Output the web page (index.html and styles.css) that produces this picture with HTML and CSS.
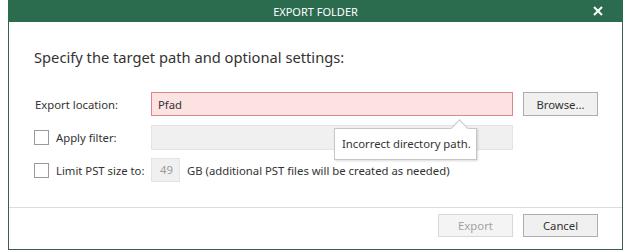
FILE: index.html
```html
<!DOCTYPE html>
<html lang="en">
<head>
    <meta charset="UTF-8">
    <title>Export Folder</title>
    <link rel="stylesheet" href="styles.css">
</head>
<body>
    <div class="dialog">
        <div class="titlebar">
            EXPORT FOLDER
            <span class="close">
                <svg width="10" height="10" viewBox="0 0 10 10"><path d="M1 1 L9 9 M9 1 L1 9" stroke="#fff" stroke-width="2"/></svg>
            </span>
        </div>

        <div class="content">
            <h1>Specify the target path and optional settings:</h1>

            <div class="form">
                <label class="label">Export location:</label>
                <input type="text" class="field invalid" value="Pfad">
                <button type="button" class="btn">Browse...</button>

                <label class="label"><span class="check"></span>Apply filter:</label>
                <div class="field disabled"></div>
                <div></div>

                <label class="label"><span class="check"></span>Limit PST size to:</label>
                <div class="size-row">
                    <div class="number">49</div>
                    <span>GB (additional PST files will be created as needed)</span>
                </div>

                <div class="tooltip">Incorrect directory path.</div>
            </div>
        </div>

        <div class="footer">
            <button type="button" class="btn" disabled>Export</button>
            <button type="button" class="btn">Cancel</button>
        </div>
    </div>
</body>
</html>
```

FILE: styles.css
```css
body {
    margin: 0;
    font-family: "Noto Sans", "Open Sans", sans-serif;
    font-size: 11.3px;
    color: #333;
    background-color: white;
}
.dialog {
    margin-left: 8px;
    width: 615px;
    height: 250px;
    box-sizing: border-box;
    border: 1px solid #3d5c52;
    border-top: none;
    display: flex;
    flex-direction: column;
}
.titlebar {
    position: relative;
    height: 22px;
    margin: 0 -1px;
    background-color: #2b6c4f;
    color: white;
    font-size: 11px;
    display: flex;
    align-items: center;
    justify-content: center;
}
.close {
    position: absolute;
    right: 20px;
    top: 6px;
    line-height: 0;
}
.content {
    flex: 1;
    padding: 25px 24px 0 25px;
}
h1 {
    margin: 0;
    font-size: 14.7px;
    font-weight: normal;
    line-height: 20px;
    color: #333;
}
.form {
    position: relative;
    margin-top: 25px;
    display: grid;
    grid-template-columns: 107px 362px 75px;
    grid-auto-rows: 24px;
    column-gap: 10px;
    row-gap: 9px;
}
.label {
    display: flex;
    align-items: center;
    padding-left: 1px;
    white-space: nowrap;
}
.check {
    flex: none;
    width: 13px;
    height: 13px;
    border: 1px solid #9a9a9a;
    background: white;
    margin: 0 7px 0 -1px;
}
.field {
    box-sizing: border-box;
    height: 24px;
    margin: 0;
    padding: 0 6px;
    font-family: inherit;
    font-size: 11.3px;
    color: #333;
    outline: none;
}
.invalid {
    background-color: #fde2e2;
    border: 1px solid #d9888e;
}
.disabled {
    background-color: #f0f0f0;
    border: 1px solid #e3e3e3;
    height: 25px;
}
.size-row {
    grid-column: 2 / 4;
    display: flex;
    align-items: center;
    gap: 7px;
    white-space: nowrap;
}
.number {
    box-sizing: border-box;
    width: 29px;
    height: 24px;
    background-color: #f0f0f0;
    border: 1px solid #e3e3e3;
    color: #9a9a9a;
    text-align: right;
    padding-right: 6px;
    line-height: 22px;
}
.btn {
    box-sizing: border-box;
    width: 75px;
    height: 24px;
    font-family: inherit;
    font-size: 11.3px;
    color: #333;
    background-color: #f0f0f0;
    border: 1px solid #adadad;
    padding: 0;
}
.btn:disabled {
    color: #a3a3a3;
    background-color: #f4f4f4;
    border-color: #d9d9d9;
}
.tooltip {
    position: absolute;
    left: 300px;
    top: 36px;
    box-sizing: border-box;
    width: 143px;
    height: 32px;
    padding: 0 7px;
    line-height: 30px;
    font-size: 11.3px;
    white-space: nowrap;
    background: white;
    border: 1px solid #c6c6c6;
    box-shadow: 1px 1px 2px rgba(0,0,0,0.15);
}
.tooltip::before {
    content: "";
    position: absolute;
    left: 118px;
    top: -7px;
    width: 12px;
    height: 12px;
    background: white;
    border-top: 1px solid #c6c6c6;
    border-left: 1px solid #c6c6c6;
    transform: rotate(45deg);
}
.footer {
    border-top: 1px solid #dcdcdc;
    padding: 6px 24px 12px;
    display: flex;
    justify-content: flex-end;
    gap: 10px;
}
.footer .btn {
    height: 23px;
}
```
